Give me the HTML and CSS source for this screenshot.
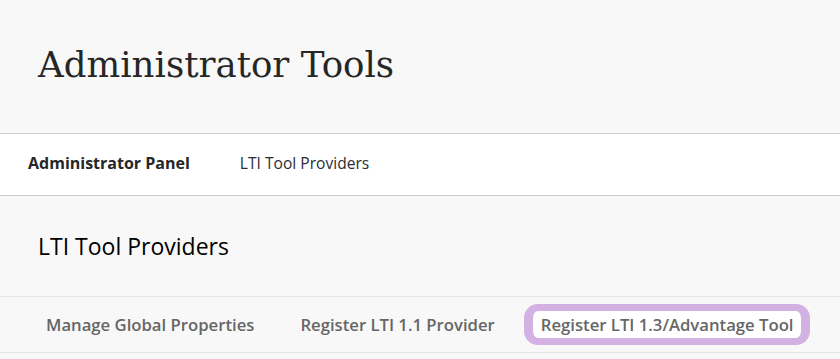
FILE: index.html
```html
<!DOCTYPE html>
<html>

<head>
    <link rel="stylesheet" href="styles.css">
</head>

<body>
    <header class="page-header">
        <h1>Administrator Tools</h1>
    </header>

    <nav class="breadcrumbs">
        <a class="crumb current" href="#">Administrator Panel</a>
        <a class="crumb" href="#">LTI Tool Providers</a>
    </nav>

    <section class="panel">
        <h2>LTI Tool Providers</h2>

        <div class="tabs">
            <a class="tab" href="#">Manage Global Properties</a>
            <a class="tab" href="#">Register LTI 1.1 Provider</a>
            <a class="tab focused" href="#">Register LTI 1.3/Advantage Tool</a>
        </div>
    </section>
</body>

</html>
```

FILE: styles.css
```css
body {
    margin: 0;
    background-color: #f8f8f8;
    font-family: "Open Sans", "Noto Sans", sans-serif;
    color: #262626;
}

.page-header {
    height: 133px;
    border-bottom: 1px solid #cdcdcd;
    display: flex;
    align-items: center;
    padding-left: 38px;
}

.page-header h1 {
    margin: 0 0 4px;
    font-family: "DejaVu Serif", "Liberation Serif", serif;
    font-weight: normal;
    font-size: 35.6px;
    color: #262626;
}

.breadcrumbs {
    background-color: #fff;
    height: 58px;
    padding-bottom: 3px;
    border-bottom: 1px solid #cdcdcd;
    display: flex;
    align-items: center;
    padding-left: 28px;
    gap: 50px;
}

.crumb {
    font-size: 15.6px;
    color: #2c2c35;
    text-decoration: none;
}

.crumb.current {
    font-weight: 700;
    font-size: 16px;
    color: #262626;
}

.panel h2 {
    margin: 0;
    height: 100px;
    display: flex;
    align-items: center;
    padding-left: 38px;
    font-size: 23px;
    font-weight: normal;
    color: #000;
}

.tabs {
    border-top: 1px solid #e5e5e5;
    border-bottom: 1px solid #e5e5e5;
    height: 55px;
    display: flex;
    align-items: center;
    padding-left: 29px;
    gap: 12px;
}

.tab {
    font-size: 16.7px;
    font-weight: 600;
    color: #666;
    text-decoration: none;
    padding: 2px 8px;
    border: solid transparent;
    border-width: 7px 9px;
    border-radius: 14px;
}

.tab.focused {
    background-color: #fff;
    border-color: #d3b1e3;
}
```
